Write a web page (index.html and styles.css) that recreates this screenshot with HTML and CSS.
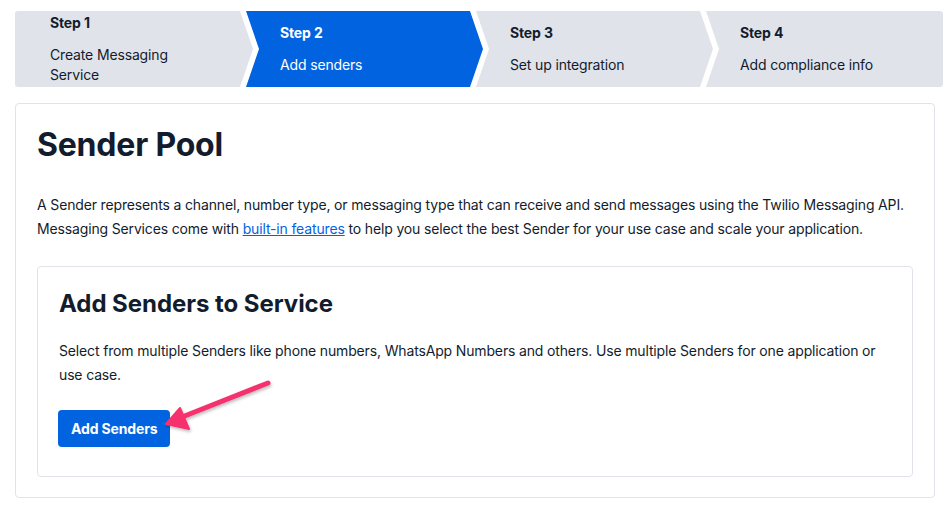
FILE: index.html
```html
<!DOCTYPE html>
<html lang="en">
<head>
<meta charset="utf-8">
<title>Sender Pool</title>
<link rel="stylesheet" href="styles.css">
</head>
<body>
<div class="page">
  <ol class="steps">
    <li class="step step-first">
      <span class="step-title">Step 1</span>
      <span class="step-desc">Create Messaging<br>Service</span>
    </li>
    <li class="step step-current">
      <span class="step-title">Step 2</span>
      <span class="step-desc">Add senders</span>
    </li>
    <li class="step">
      <span class="step-title">Step 3</span>
      <span class="step-desc">Set up integration</span>
    </li>
    <li class="step step-last">
      <span class="step-title">Step 4</span>
      <span class="step-desc">Add compliance info</span>
    </li>
  </ol>

  <section class="card">
    <h1 class="card-title">Sender Pool</h1>
    <p class="card-text">A Sender represents a channel, number type, or messaging type that can receive and send messages using the Twilio Messaging API. Messaging Services come with <a href="#" class="link">built-in features</a> to help you select the best Sender for your use case and scale your application.</p>

    <div class="subcard">
      <h2 class="subcard-title">Add Senders to Service</h2>
      <p class="subcard-text">Select from multiple Senders like phone numbers, WhatsApp Numbers and others. Use multiple Senders for one application or use case.</p>
      <button class="btn-primary" type="button">Add Senders</button>
      <svg class="callout-arrow" width="130" height="70" viewBox="0 0 130 70" aria-hidden="true">
        <defs>
          <filter id="sh" x="-20%" y="-30%" width="140%" height="160%">
            <feDropShadow dx="1" dy="2" stdDeviation="1.5" flood-color="#000" flood-opacity="0.25"/>
          </filter>
        </defs>
        <g filter="url(#sh)">
          <line x1="121" y1="16" x2="30" y2="52" stroke="#f5336d" stroke-width="5" stroke-linecap="round"/>
          <polygon points="19,57 33,41 42,62" fill="#f5336d" stroke="#f5336d" stroke-width="2" stroke-linejoin="round"/>
        </g>
      </svg>
    </div>
  </section>
</div>
</body>
</html>
```

FILE: styles.css
```css
* { box-sizing: border-box; }

html, body {
  margin: 0;
  padding: 0;
  background: #ffffff;
}

body {
  font-family: Inter, "Noto Sans", "Liberation Sans", sans-serif;
  color: #121c2d;
  font-size: 14px;
  line-height: 20px;
  letter-spacing: -0.15px;
}

.page {
  padding: 11px 0 0 15px;
}

/* ---------- Stepper ---------- */
.steps {
  list-style: none;
  margin: 0;
  padding: 0;
  display: flex;
  width: 928px;
  height: 76px;
  border-radius: 3px;
  overflow: hidden;
}

.step {
  flex: 0 0 237px;
  height: 76px;
  margin-left: -7px;
  padding-left: 34px;
  background: #e1e3ea;
  display: flex;
  flex-direction: column;
  justify-content: center;
  gap: 12px;
  clip-path: polygon(0 0, calc(100% - 13px) 0, 100% 50%, calc(100% - 13px) 100%, 0 100%, 13px 50%);
}

.step-first {
  flex-basis: 238px;
  margin-left: 0;
  padding-left: 35px;
  clip-path: polygon(0 0, calc(100% - 13px) 0, 100% 50%, calc(100% - 13px) 100%, 0 100%);
}

.step-last {
  clip-path: polygon(0 0, 100% 0, 100% 100%, 0 100%, 13px 50%);
}

.step-current {
  background: #0263e0;
  color: #ffffff;
}

.step-title {
  font-weight: 700;
  font-size: 14px;
  line-height: 20px;
}

.step-desc {
  font-size: 14px;
  line-height: 20px;
}

/* ---------- Cards ---------- */
.card {
  width: 920px;
  margin-top: 16px;
  border: 1px solid #e1e3ea;
  border-radius: 4px;
  padding: 21px 21px 20px 21px;
}

.card-title {
  margin: 0 0 28px 0;
  font-size: 32px;
  line-height: 40px;
  font-weight: 700;
  letter-spacing: -0.2px;
  color: #121c2d;
}

.card-text {
  margin: 0 0 25px 0;
  font-size: 14px;
  line-height: 24px;
}

.link {
  color: #0263e0;
  text-decoration: underline;
}

.subcard {
  position: relative;
  border: 1px solid #e1e3ea;
  border-radius: 4px;
  padding: 21px 21px 29px 20px;
}

.subcard-title {
  margin: 0 0 19px 1px;
  font-size: 24px;
  line-height: 32px;
  font-weight: 700;
  letter-spacing: -0.05px;
  color: #121c2d;
}

.subcard-text {
  margin: 0 0 23px 1px;
  font-size: 14px;
  line-height: 24px;
}

.btn-primary {
  display: block;
  height: 37px;
  padding: 0 13px;
  border: none;
  border-radius: 4px;
  background: #0263e0;
  color: #ffffff;
  font-family: inherit;
  font-size: 14px;
  font-weight: 700;
  line-height: 20px;
  letter-spacing: -0.15px;
}

.callout-arrow {
  position: absolute;
  left: 109px;
  top: 100px;
  overflow: visible;
}
```
